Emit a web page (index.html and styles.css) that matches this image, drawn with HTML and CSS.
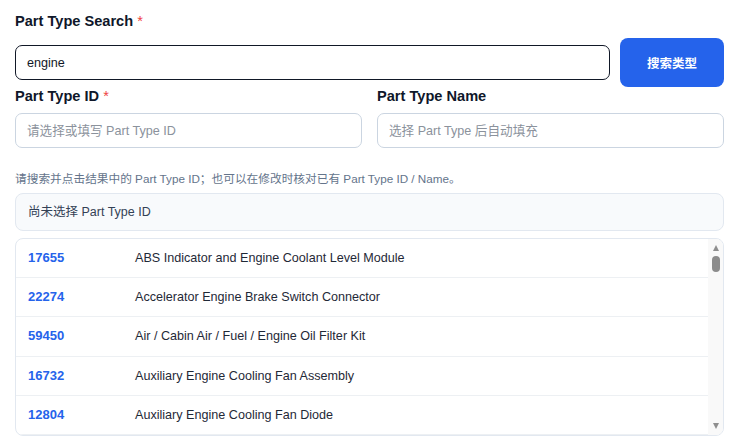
FILE: index.html
```html
<!DOCTYPE html>
<html lang="zh-CN">
<head>
    <meta charset="UTF-8">
    <meta name="viewport" content="width=device-width, initial-scale=1.0">
    <title>Part Type Search</title>
    <link rel="stylesheet" href="styles.css">
</head>
<body>

    <div class="panel">
        <label class="field-label" for="searchInput">Part Type Search <span class="req">*</span></label>
        <div class="search-row">
            <input type="text" id="searchInput" class="text-input text-input--active" value="engine">
            <button class="btn-search">搜索类型</button>
        </div>

        <div class="two-col">
            <div class="field">
                <label class="field-label" for="typeId">Part Type ID <span class="req">*</span></label>
                <input type="text" id="typeId" class="text-input" placeholder="请选择或填写 Part Type ID">
            </div>
            <div class="field">
                <label class="field-label" for="typeName">Part Type Name</label>
                <input type="text" id="typeName" class="text-input" placeholder="选择 Part Type 后自动填充">
            </div>
        </div>

        <p class="hint">请搜索并点击结果中的 Part Type ID；也可以在修改时核对已有 Part Type ID / Name。</p>

        <div class="selected-box">尚未选择 Part Type ID</div>

        <div class="result-list">
            <div class="result-rows">
                <div class="result-row"><span class="result-id">17655</span><span class="result-name">ABS Indicator and Engine Coolant Level Module</span></div>
                <div class="result-row"><span class="result-id">22274</span><span class="result-name">Accelerator Engine Brake Switch Connector</span></div>
                <div class="result-row"><span class="result-id">59450</span><span class="result-name">Air / Cabin Air / Fuel / Engine Oil Filter Kit</span></div>
                <div class="result-row"><span class="result-id">16732</span><span class="result-name">Auxiliary Engine Cooling Fan Assembly</span></div>
                <div class="result-row"><span class="result-id">12804</span><span class="result-name">Auxiliary Engine Cooling Fan Diode</span></div>
            </div>
            <div class="scrollbar">
                <span class="scroll-arrow scroll-arrow--up"></span>
                <span class="scroll-thumb"></span>
                <span class="scroll-space"></span>
                <span class="scroll-arrow scroll-arrow--down"></span>
            </div>
        </div>
    </div>

</body>
</html>
```

FILE: styles.css
```css
* {
    box-sizing: border-box;
}

body {
    margin: 0;
    background: #fff;
    font-family: "Liberation Sans", Arial, "Noto Sans CJK SC", sans-serif;
    color: #0f172a;
}

.panel {
    padding: 13px 15px 0;
}

.field-label {
    display: block;
    font-size: 14.6px;
    font-weight: 700;
    line-height: 17px;
    margin-bottom: 8px;
    color: #0f172a;
}

.req {
    color: #ef4444;
    font-weight: 400;
}

.search-row {
    display: flex;
    align-items: center;
    gap: 10px;
}

.text-input {
    width: 100%;
    height: 35px;
    padding: 0 11px;
    border: 1px solid #cbd5e1;
    border-radius: 7px;
    font-family: "Liberation Sans", Arial, "Noto Sans CJK SC", sans-serif;
    font-size: 12.6px;
    color: #111827;
    background: #fff;
    outline: none;
}

.text-input::placeholder {
    color: #8b929c;
}

.text-input--active {
    flex: 1;
    border-color: #111827;
}

.btn-search {
    flex: 0 0 104px;
    height: 49px;
    border: none;
    border-radius: 8px;
    background-color: #2563eb;
    color: #fff;
    font-family: "Noto Sans CJK SC", sans-serif;
    font-size: 12.5px;
    font-weight: 700;
}

.two-col {
    display: grid;
    grid-template-columns: 1fr 1fr;
    gap: 15px;
    margin-top: 1px;
}

.hint {
    margin: 23px 0 6px;
    font-size: 11.7px;
    line-height: 16px;
    color: #64748b;
}

.selected-box {
    padding: 10px 12px;
    border: 1px solid #e2e8f0;
    border-radius: 8px;
    background: #f8fafc;
    font-size: 12.5px;
    line-height: 16px;
    color: #334155;
}

.result-list {
    display: flex;
    margin-top: 7px;
    border: 1px solid #e2e8f0;
    border-radius: 8px;
    overflow: hidden;
}

.result-rows {
    flex: 1;
}

.result-row {
    display: grid;
    grid-template-columns: 99px 1fr;
    gap: 8px;
    padding: 10px 12px;
    border-bottom: 1px solid #edf0f3;
    font-size: 12.6px;
    line-height: 18.2px;
}

.result-id {
    color: #2563eb;
    font-size: 13px;
    font-weight: 700;
}

.result-name {
    color: #1f2937;
}

/* fake native scrollbar */
.scrollbar {
    flex: 0 0 15px;
    display: flex;
    flex-direction: column;
    align-items: center;
    padding: 6px 0;
    background: #f9f9f9;
}

.scroll-arrow {
    width: 0;
    height: 0;
    border-left: 3.5px solid transparent;
    border-right: 3.5px solid transparent;
}

.scroll-arrow--up {
    border-bottom: 6px solid #8f8f8f;
}

.scroll-arrow--down {
    border-top: 6px solid #8f8f8f;
}

.scroll-thumb {
    width: 8px;
    height: 16px;
    margin-top: 5px;
    border-radius: 4px;
    background: #8c8c8c;
}

.scroll-space {
    flex: 1;
}
```
